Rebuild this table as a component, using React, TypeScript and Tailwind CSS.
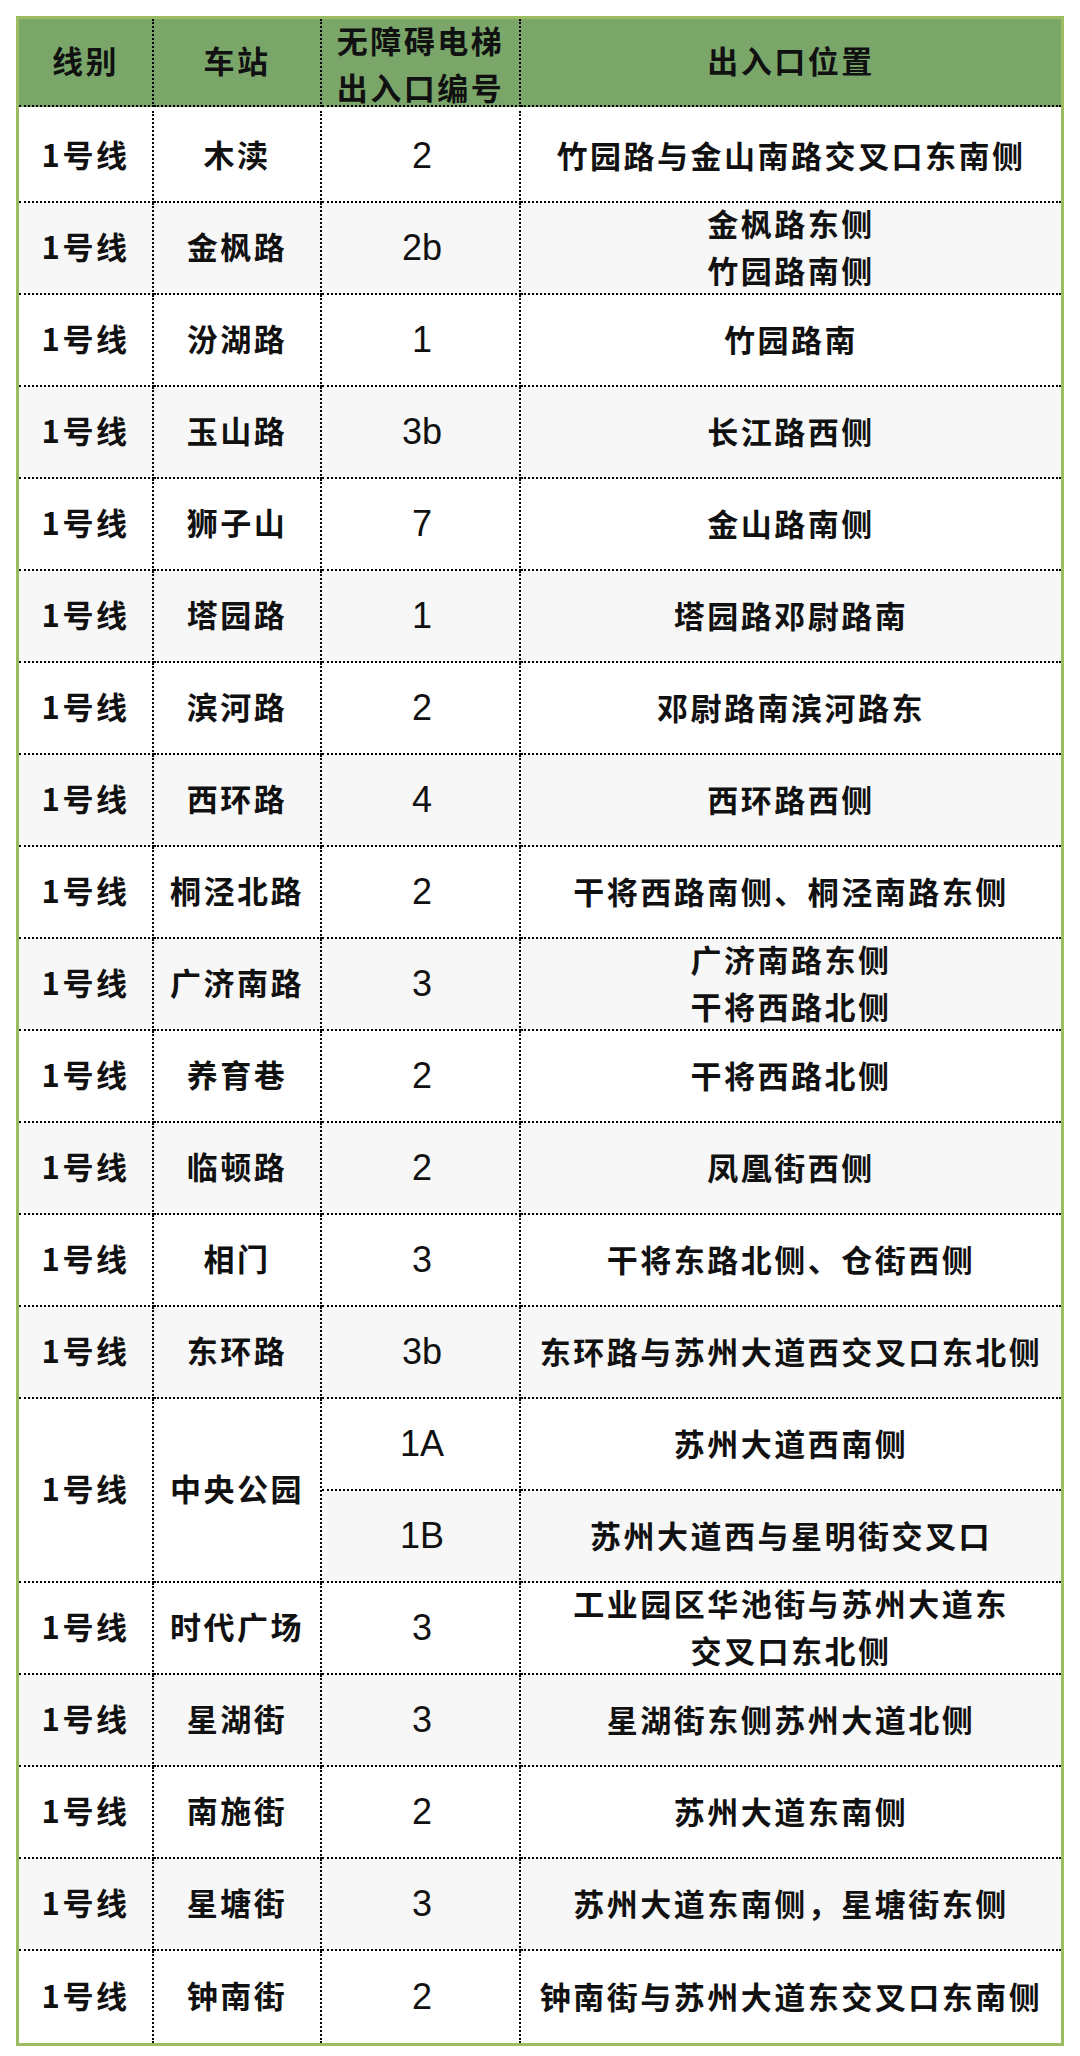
import React from 'react';

type Row = { station?: string; span?: number; no: string; place: string[] };

const rows: Row[] = [
  { station: '木渎', no: '2', place: ['竹园路与金山南路交叉口东南侧'] },
  { station: '金枫路', no: '2b', place: ['金枫路东侧', '竹园路南侧'] },
  { station: '汾湖路', no: '1', place: ['竹园路南'] },
  { station: '玉山路', no: '3b', place: ['长江路西侧'] },
  { station: '狮子山', no: '7', place: ['金山路南侧'] },
  { station: '塔园路', no: '1', place: ['塔园路邓尉路南'] },
  { station: '滨河路', no: '2', place: ['邓尉路南滨河路东'] },
  { station: '西环路', no: '4', place: ['西环路西侧'] },
  { station: '桐泾北路', no: '2', place: ['干将西路南侧、桐泾南路东侧'] },
  { station: '广济南路', no: '3', place: ['广济南路东侧', '干将西路北侧'] },
  { station: '养育巷', no: '2', place: ['干将西路北侧'] },
  { station: '临顿路', no: '2', place: ['凤凰街西侧'] },
  { station: '相门', no: '3', place: ['干将东路北侧、仓街西侧'] },
  { station: '东环路', no: '3b', place: ['东环路与苏州大道西交叉口东北侧'] },
  { station: '中央公园', span: 2, no: '1A', place: ['苏州大道西南侧'] },
  { no: '1B', place: ['苏州大道西与星明街交叉口'] },
  { station: '时代广场', no: '3', place: ['工业园区华池街与苏州大道东', '交叉口东北侧'] },
  { station: '星湖街', no: '3', place: ['星湖街东侧苏州大道北侧'] },
  { station: '南施街', no: '2', place: ['苏州大道东南侧'] },
  { station: '星塘街', no: '3', place: ['苏州大道东南侧，星塘街东侧'] },
  { station: '钟南街', no: '2', place: ['钟南街与苏州大道东交叉口东南侧'] },
];

const cjk = "font-['Noto_Sans_CJK_SC',sans-serif] font-bold text-[31px] tracking-[2.5px]";

export default function App() {
  // stripe counts physical rows (中央公园 takes two)
  let stripe = 0;
  return (
    <div className="bg-white w-[1080px] h-[2056px] pt-[16px] pl-[16px]">
      <div className="w-[1048px] border-[3px] border-[#9dbb61] text-[#111]">
        <div className="grid grid-cols-[135px_168px_199px_540px] auto-rows-[92px]">
          {/* header */}
          <div className={`${cjk} h-[88px] bg-[#7aa66a] flex items-center justify-center pb-[3px] border-r-2 border-b-2 border-dotted border-black`}>线别</div>
          <div className={`${cjk} h-[88px] bg-[#7aa66a] flex items-center justify-center pb-[3px] border-r-2 border-b-2 border-dotted border-black`}>车站</div>
          <div className={`${cjk} h-[88px] bg-[#7aa66a] flex flex-col items-center justify-center leading-[47px] pt-[2px] border-r-2 border-b-2 border-dotted border-black`}>
            <span>无障碍电梯</span>
            <span>出入口编号</span>
          </div>
          <div className={`${cjk} h-[88px] bg-[#7aa66a] flex items-center justify-center pb-[3px] border-b-2 border-dotted border-black`}>出入口位置</div>

          {rows.map((r, i) => {
            const bg = stripe % 2 === 0 ? 'bg-white' : 'bg-[#f7f7f7]';
            stripe += 1;
            const last = i === rows.length - 1;
            const bb = last ? '' : 'border-b-2';
            const span = r.span === 2 ? 'row-span-2' : '';
            return (
              <React.Fragment key={i}>
                {r.station && (
                  <div className={`${cjk} ${bg} ${bb} ${span} flex items-center justify-center pb-[4px] border-r-2 border-dotted border-black`}>
                    1号线
                  </div>
                )}
                {r.station && (
                  <div className={`${cjk} ${bg} ${bb} ${span} flex items-center justify-center pb-[4px] border-r-2 border-dotted border-black`}>
                    {r.station}
                  </div>
                )}
                <div className={`${bg} ${bb} font-['Liberation_Sans',Arial,sans-serif] text-[36px] pl-[3px] flex items-center justify-center border-r-2 border-dotted border-black`}>
                  {r.no}
                </div>
                <div className={`${cjk} ${bg} ${bb} flex flex-col items-center justify-center leading-[47px] pb-[4px] border-dotted border-black`}>
                  {r.place.map((p) => (
                    <span key={p}>{p}</span>
                  ))}
                </div>
              </React.Fragment>
            );
          })}
        </div>
      </div>
    </div>
  );
}
